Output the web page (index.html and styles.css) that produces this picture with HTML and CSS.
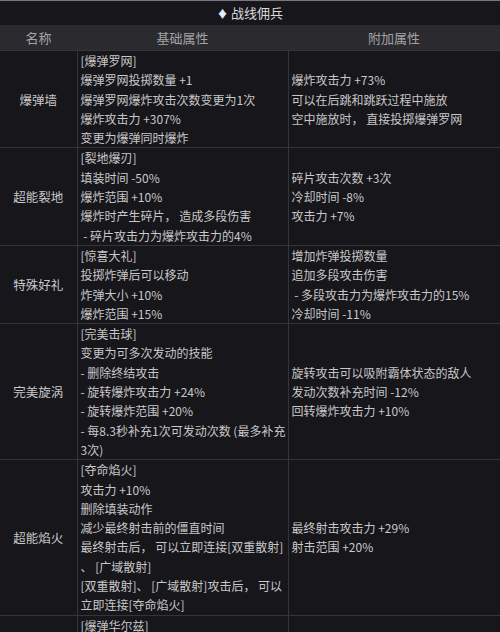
FILE: index.html
```html
<!DOCTYPE html>
<html lang="zh">
<head>
<meta charset="utf-8">
<link rel="stylesheet" href="styles.css">
</head>
<body>
<div class="page">
  <div class="title"><span class="dia">♦</span> 战线佣兵</div>
  <table class="grid">
    <colgroup><col class="c1"><col class="c2"><col class="c3"></colgroup>
    <thead>
      <tr><th>名称</th><th>基础属性</th><th>附加属性</th></tr>
    </thead>
    <tbody>
      <tr>
        <td class="name">爆弹墙</td>
        <td>[爆弹罗网]<br>爆弹罗网投掷数量 +1<br>爆弹罗网爆炸攻击次数变更为1次<br>爆炸攻击力 +307%<br>变更为爆弹同时爆炸</td>
        <td>爆炸攻击力 +73%<br>可以在后跳和跳跃过程中施放<br>空中施放时， 直接投掷爆弹罗网</td>
      </tr>
      <tr>
        <td class="name">超能裂地</td>
        <td>[裂地爆刃]<br>填装时间 -50%<br>爆炸范围 +10%<br>爆炸时产生碎片， 造成多段伤害<br>&nbsp;- 碎片攻击力为爆炸攻击力的4%</td>
        <td>碎片攻击次数 +3次<br>冷却时间 -8%<br>攻击力 +7%</td>
      </tr>
      <tr>
        <td class="name">特殊好礼</td>
        <td>[惊喜大礼]<br>投掷炸弹后可以移动<br>炸弹大小 +10%<br>爆炸范围 +15%</td>
        <td>增加炸弹投掷数量<br>追加多段攻击伤害<br>&nbsp;- 多段攻击力为爆炸攻击力的15%<br>冷却时间 -11%</td>
      </tr>
      <tr>
        <td class="name">完美旋涡</td>
        <td>[完美击球]<br>变更为可多次发动的技能<br>- 删除终结攻击<br>- 旋转爆炸攻击力 +24%<br>- 旋转爆炸范围 +20%<br>- 每8.3秒补充1次可发动次数 (最多补充<br>3次)</td>
        <td>旋转攻击可以吸附霸体状态的敌人<br>发动次数补充时间 -12%<br>回转爆炸攻击力 +10%</td>
      </tr>
      <tr>
        <td class="name">超能焰火</td>
        <td>[夺命焰火]<br>攻击力 +10%<br>删除填装动作<br>减少最终射击前的僵直时间<br>最终射击后， 可以立即连接[双重散射]<br>、 [广域散射]<br>[双重散射]、 [广域散射]攻击后， 可以<br>立即连接[夺命焰火]</td>
        <td>最终射击攻击力 +29%<br>射击范围 +20%</td>
      </tr>
      <tr>
        <td class="name"></td>
        <td class="top">[爆弹华尔兹]</td>
        <td></td>
      </tr>
    </tbody>
  </table>
</div>
</body>
</html>
```

FILE: styles.css
```css
html, body {
  margin: 0;
  padding: 0;
  background: #17161b;
}
body {
  width: 500px;
  height: 632px;
  overflow: hidden;
  font-family: "Noto Sans CJK SC", "Noto Sans", sans-serif;
  color: #c8c8c8;
  font-size: 12px;
}
.page {
  border-top: 1px solid #77777d;
}
.title {
  height: 24px;
  line-height: 24px;
  text-align: center;
  color: #dcdcdc;
  font-size: 13px;
  background: #17161b;
}
.dia {
  font-size: 11px;
  color: #e8e8ff;
}
.grid {
  width: 500px;
  border-collapse: collapse;
  table-layout: fixed;
}
.c1 { width: 77px; }
.c2 { width: 211px; }
.c3 { width: 212px; }
.grid th {
  height: 25px;
  padding: 0;
  background: #2a2a2f;
  color: #a3a3a6;
  font-weight: normal;
  font-size: 13px;
  border-bottom: 1px solid #34343a;
}
.grid td {
  padding: 0 3px;
  line-height: 19.3px;
  vertical-align: middle;
  border: 1px solid #34343a;
  white-space: nowrap;
}
.grid tr td:first-child { border-left: none; }
.grid tr td:last-child { border-right: none; }
.grid td.name {
  text-align: center;
  font-size: 12.5px;
}
.grid td.top {
  vertical-align: top;
  height: 40px;
}
```
